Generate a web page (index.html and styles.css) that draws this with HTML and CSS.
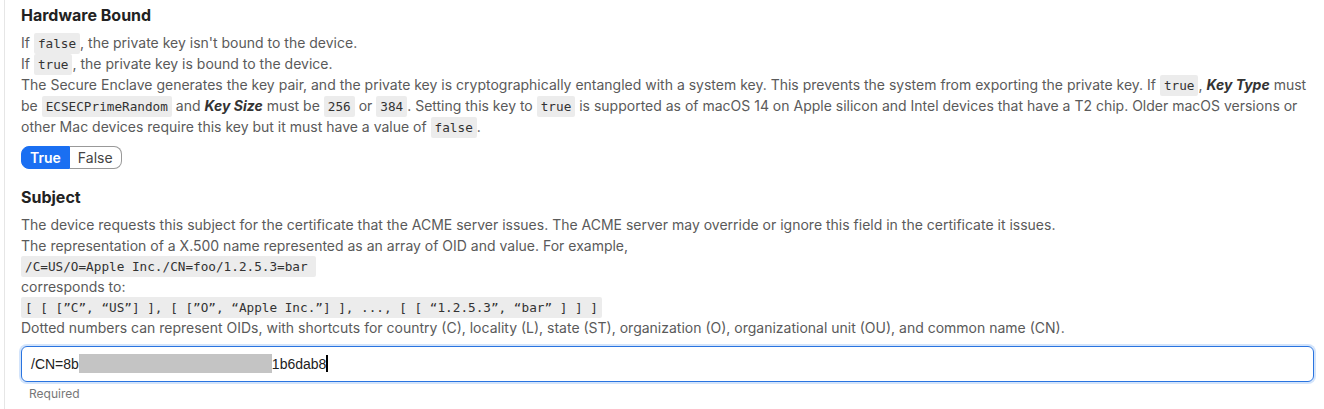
FILE: index.html
```html
<!DOCTYPE html>
<html>
<head>
<meta charset="utf-8">
<link rel="stylesheet" href="styles.css">
</head>
<body>
<div class="page">
  <section class="field">
    <h3 class="title">Hardware Bound</h3>
    <div class="desc">
      <p>If <code>false</code>, the private key isn't bound to the device.</p>
      <p>If <code>true</code>, the private key is bound to the device.</p>
      <p>The Secure Enclave generates the key pair, and the private key is cryptographically entangled with a system key. This prevents the system from exporting the private key. If <code>true</code>, <b><i>Key Type</i></b> must be <code>ECSECPrimeRandom</code> and <b><i>Key Size</i></b> must be <code>256</code> or <code>384</code>. Setting this key to <code>true</code> is supported as of macOS 14 on Apple silicon and Intel devices that have a T2 chip. Older macOS versions or other Mac devices require this key but it must have a value of <code>false</code>.</p>
    </div>
    <div class="toggle">
      <span class="opt active">True</span><span class="opt">False</span>
    </div>
  </section>
  <section class="field">
    <h3 class="title sub-title">Subject</h3>
    <div class="desc sub">
      <p>The device requests this subject for the certificate that the ACME server issues. The ACME server may override or ignore this field in the certificate it issues.</p>
      <p>The representation of a X.500 name represented as an array of OID and value. For example,</p>
      <p><code class="wide">/C=US/O=Apple Inc./CN=foo/1.2.5.3=bar</code></p>
      <p>corresponds to:</p>
      <p><code>[ [ [”C”, “US”] ], [ [”O”, “Apple Inc.”] ], ..., [ [ “1.2.5.3”, “bar” ] ] ]</code></p>
      <p>Dotted numbers can represent OIDs, with shortcuts for country (C), locality (L), state (ST), organization (O), organizational unit (OU), and common name (CN).</p>
    </div>
    <div class="input">
      <span class="val">/CN=8b</span><span class="redact"></span><span class="val">1b6dab8</span><span class="caret"></span>
    </div>
    <div class="hint">Required</div>
  </section>
</div>
</body>
</html>
```
FILE: styles.css
```css
html, body {
  margin: 0;
  padding: 0;
  background: #fff;
}
.page {
  margin-left: 4px;
  border-left: 1px solid #e6e6e6;
  padding: 4px 10px 0 16px;
  height: 405px;
  overflow: hidden;
  font-family: Inter, "Noto Sans", sans-serif;
  font-size: 14px;
  color: #5a5a5a;
}
.field + .field {
  margin-top: 17px;
}
.title {
  margin: 0 0 5.5px 0;
  font-size: 16px;
  font-weight: 700;
  color: #222;
  line-height: 22px;
}
.sub-title {
  margin-bottom: 7px;
}
.desc p {
  margin: 0;
  line-height: 21px;
}
.desc.sub p {
  line-height: 20.6px;
}
code {
  font-family: "DejaVu Sans Mono", "Liberation Mono", monospace;
  font-size: 12.7px;
  line-height: 1;
  background: #ececec;
  color: #333;
  padding: 3px 4px;
  border-radius: 2px;
}
code.wide {
  padding-right: 8px;
}
.desc b {
  color: #333;
}
.toggle {
  display: inline-flex;
  margin-top: 9.5px;
  height: 23px;
  font-size: 14px;
}
.opt {
  display: flex;
  align-items: center;
  padding: 0 8px;
  border: 1px solid #999;
  border-left: none;
  border-radius: 0 8px 8px 0;
  color: #444;
}
.opt.active {
  background: #1a6ff2;
  border-color: #1a6ff2;
  color: #fff;
  border-radius: 8px 0 0 8px;
  font-weight: 600;
  border-left: 1px solid #1a6ff2;
}
.input {
  box-sizing: border-box;
  margin-top: 7px;
  height: 36px;
  border: 1.5px solid #2a74e0;
  border-radius: 6px;
  box-shadow: 0 0 0 2px #d3e4fb;
  display: flex;
  align-items: center;
  padding: 0 9px;
  font-family: "Liberation Sans", Arial, sans-serif;
  font-size: 14px;
  color: #222;
}
.redact {
  display: inline-block;
  width: 193px;
  height: 19px;
  background: #c4c4c4;
}
.caret {
  display: inline-block;
  width: 1.5px;
  height: 17px;
  background: #000;
}
.hint {
  margin-top: 5px;
  padding-left: 8px;
  font-size: 12px;
  line-height: 14px;
  color: #777;
}
```
